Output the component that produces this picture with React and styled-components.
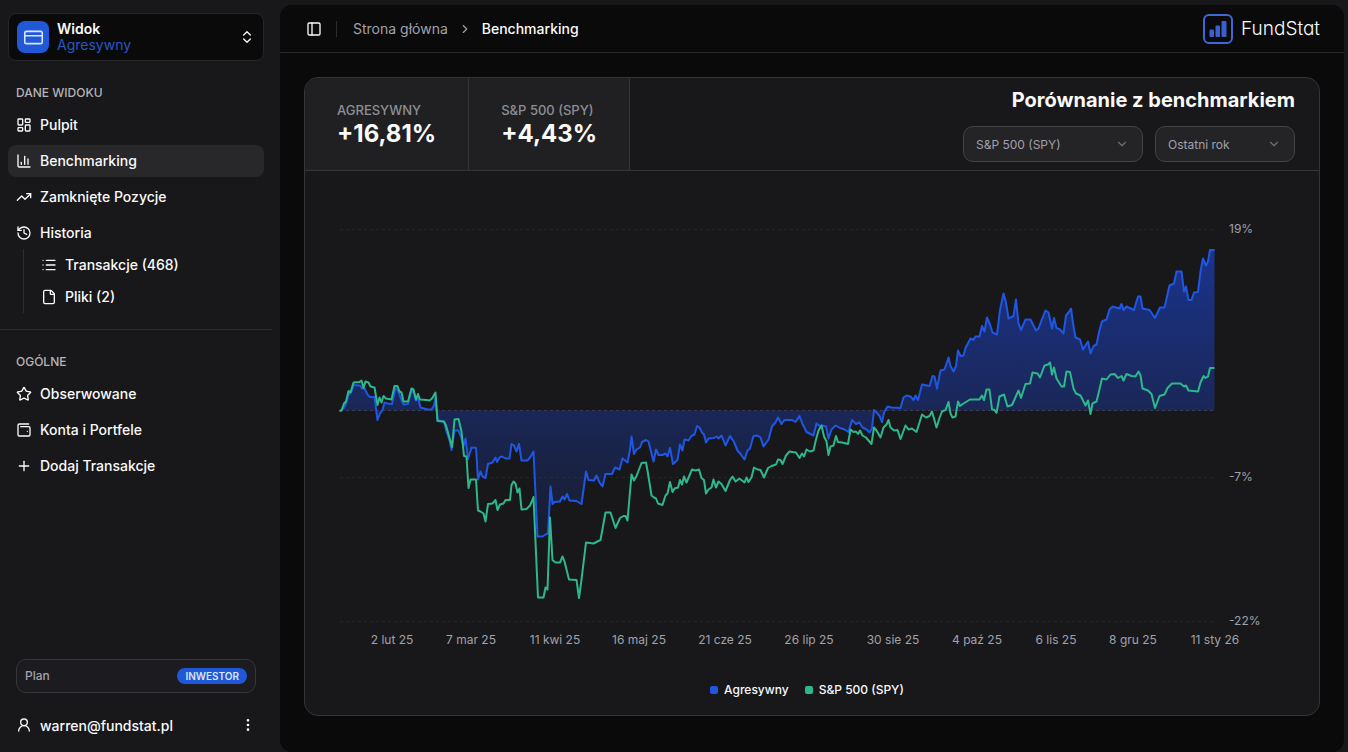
import React, {useState} from "react";
import styled, {createGlobalStyle} from "styled-components";
import {
    ChartColumn,
    ChevronDown,
    ChevronRight,
    ChevronsUpDown,
    CreditCard,
    EllipsisVertical,
    File,
    History,
    LayoutDashboard,
    List,
    PanelLeft,
    Plus,
    Star,
    TrendingUp,
    UserRound,
    WalletMinimal,
} from "lucide-react";

const GlobalStyle = createGlobalStyle`
  * {
    box-sizing: border-box;
  }

  body {
    margin: 0;
    background: #18181a;
    color: #fafafa;
    font-family: Inter, "Liberation Sans", sans-serif;
    font-size: 14px;
    line-height: 20px;
  }

  button, select {
    font-family: inherit;
    color: inherit;
  }

  ul, ol {
    list-style: none;
    margin: 0;
    padding: 0;
  }

  a {
    color: inherit;
    text-decoration: none;
  }
`

const Page = styled.div`
  display: grid;
  grid-template-columns: 272px 1fr;
  gap: 8px;
  min-height: 100vh;
  padding: 5px 4px 0 0;
`

const Sidebar = styled.aside`
  display: flex;
  flex-direction: column;
  padding: 8px 0 11px;
`

const Switcher = styled.button`
  display: flex;
  align-items: center;
  gap: 8px;
  height: 48px;
  margin: 0 8px 8px;
  padding: 8px;
  border: 1px solid #262628;
  border-radius: 8px;
  background: #0a0a0a;
  text-align: left;
`

const SwitcherIcon = styled.span`
  display: flex;
  align-items: center;
  justify-content: center;
  width: 32px;
  height: 32px;
  border-radius: 8px;
  background: #2058d8;
`

const SwitcherText = styled.span`
  display: flex;
  flex: 1;
  flex-direction: column;
  font-size: 14px;
  line-height: 16px;

  strong {
    font-weight: 600;
  }

  span {
    color: #2b56c4;
  }
`

const Group = styled.nav`
  padding: 8px;
`

const Separator = styled.hr`
  width: 100%;
  height: 1px;
  margin: 8px 0;
  border: 0;
  background: #2c2c2f;
`

const GroupLabel = styled.h2`
  margin: 0;
  padding: 0 8px;
  font-size: 12px;
  font-weight: 500;
  line-height: 32px;
  color: #b4b4b8;
`

const Menu = styled.ul`
  display: flex;
  flex-direction: column;
  gap: 4px;
`

const MenuLink = styled.a`
  display: flex;
  align-items: center;
  gap: 8px;
  height: ${p => p.$sub ? '28px' : '32px'};
  padding: 0 8px;
  border-radius: 8px;
  background: ${p => p.$active ? '#28282b' : 'transparent'};
  font-weight: 500;
`

const SubMenu = styled.ul`
  display: flex;
  flex-direction: column;
  gap: 4px;
  margin: 0 0 0 15px;
  padding: 2px 0 2px 9px;
  border-left: 1px solid #2c2c2f;
`

const SidebarFooter = styled.div`
  display: flex;
  flex-direction: column;
  gap: 16px;
  margin-top: auto;
  padding: 0 16px;
`

const Plan = styled.div`
  display: flex;
  align-items: center;
  justify-content: space-between;
  height: 34px;
  padding: 0 8px;
  border: 1px solid #36363a;
  border-radius: 10px;
  background: #1c1c20;
  font-size: 12px;
  font-weight: 500;
  color: #a1a1aa;
`

const Badge = styled.span`
  padding: 0 8px;
  border-radius: 8px;
  background: #2058d8;
  font-size: 10px;
  font-weight: 600;
  line-height: 16px;
  color: #dbe6ff;
`

const Account = styled.button`
  display: flex;
  align-items: center;
  gap: 8px;
  height: 32px;
  padding: 0;
  border: 0;
  background: none;
  font-size: 14px;
  font-weight: 500;

  span {
    flex: 1;
    text-align: left;
  }
`

const Main = styled.main`
  min-width: 0;
  border-radius: 12px;
  background: #0a0a0a;
`

const TopBar = styled.header`
  display: flex;
  align-items: center;
  justify-content: space-between;
  height: 48px;
  padding: 0 24px;
  border-bottom: 1px solid #2c2c2f;
`

const TopBarLeft = styled.div`
  display: flex;
  align-items: center;
`

const IconButton = styled.button`
  display: flex;
  padding: 2px;
  border: 0;
  background: none;
`

const Divider = styled.span`
  width: 1px;
  height: 16px;
  margin: 0 16px 0 12px;
  background: #2c2c2f;
`

const Crumbs = styled.ol`
  display: flex;
  align-items: center;
  gap: 10px;
  color: #a1a1aa;

  svg {
    display: block;
  }

  [aria-current] {
    color: #fafafa;
    font-weight: 500;
  }
`

const Brand = styled.a`
  display: flex;
  align-items: center;
  gap: 8px;
  font-size: 19px;
  font-weight: 300;
  font-feature-settings: "cv11";
`

const Content = styled.div`
  padding: 24px;
`

const Card = styled.section`
  overflow: hidden;
  border: 1px solid #353538;
  border-radius: 14px;
  background: #18181a;
`

const CardHeader = styled.div`
  display: flex;
  border-bottom: 1px solid #353538;
`

const Stat = styled.div`
  display: flex;
  flex-direction: column;
  justify-content: center;
  padding: 0 32px;
  border-right: 1px solid #353538;
  background: #202022;

  span {
    font-size: 13px;
    font-weight: 500;
    line-height: 20px;
    color: #8e8e95;
  }

  strong {
    font-size: 24px;
    font-weight: 700;
    line-height: 28px;
  }
`

const Controls = styled.div`
  display: flex;
  flex: 1;
  flex-direction: column;
  align-items: flex-end;
  gap: 12px;
  padding: 8px 24px;

  h1 {
    margin: 0;
    font-size: 20px;
    font-weight: 700;
    line-height: 28px;
  }
`

const Filters = styled.div`
  display: flex;
  gap: 12px;
`

const SelectBox = styled.label`
  position: relative;
  width: ${p => p.$wide ? '180px' : '140px'};
  color: #a1a1aa;

  select {
    appearance: none;
    width: 100%;
    height: 36px;
    padding: 0 36px 0 12px;
    border: 1px solid #434347;
    border-radius: 10px;
    background: #242427;
    font-size: 12px;
    font-weight: 400;
  }

  svg {
    position: absolute;
    top: 11px;
    right: 14px;
    opacity: 0.6;
    pointer-events: none;
  }
`

const ChartSvg = styled.svg`
  display: block;
  width: 100%;

  text {
    font-size: 12px;
    fill: #a1a1aa;
  }
`

const Legend = styled.ul`
  display: flex;
  justify-content: center;
  gap: 16px;
  padding: 20px 10px 16px 0;
  font-size: 12px;
  font-weight: 500;
  line-height: 18px;

  li {
    display: flex;
    align-items: center;
    gap: 6px;
  }
`

const Swatch = styled.i`
  width: 8px;
  height: 8px;
  border-radius: 2px;
  background: ${p => p.$color};
`

const BLUE = '#1f57e4'
const GREEN = '#2eb88a'
const BASELINE = 410.5

const portfolio = `339.5,411 343.5,408.5 346,403.5 348.5,395 351.5,391.5 353.5,385 360,385.5 362,388.5 364.5,388.5 367.5,394.5
370,397 374.5,397 377.5,420 380,413.5 382.5,410 384.5,402.5 387.5,403.5 392,404 395.5,388.5 398,390.5 400.5,397.5
403.5,404.5 408,404 411.5,390 414,393.5 416,400.5 418,397.5 420.5,407.5 427.5,409.5 431.5,409.5 434,405.5 435.5,397.5
437.5,420 444,422 446.5,431.5 449.5,440 451.5,450 454.5,430.5 458.5,430.5 461.5,438.5 463.5,446.5 465.5,438.5
468,459 471.5,447.5 476,448 478,479.5 480.5,471.5 482.5,476.5 485.5,478 488,464 492.5,462.5 495.5,457.5 497,462
499.5,457.5 502,456.5 505.5,458.5 509.5,458.5 511.5,444 514,445.5 516.5,451.5 519,444 521.5,460.5 527.5,460.5
530,457.5 533.5,451.5 537.5,536.5 542.5,536.5 545.5,534.5 548,533.5 550.5,486.5 552.5,504 554.5,502 560,501.5
562.5,496.5 564.5,499.5 567,494 569.5,500.5 576.5,501 581.5,504 586,471.5 588.5,480 594,480.5 596.5,475.5 599.5,482.5
602.5,486.5 605.5,474 612,474 615,467.5 619.5,469.5 622.5,458.5 627.5,462.5 630,450 631.5,436.5 634,454 636.5,449.5
640,447.5 642,442 646,440 648.5,441.5 651,451.5 653.5,461.5 656,449.5 658.5,455 662.5,455 665.5,453.5 667.5,456.5
670,448 673,464 677.5,460 680,444.5 682.5,450.5 684.5,439.5 688.5,440.5 691.5,436 694.5,434.5 697,426 699.5,427.5
702,432.5 704,434.5 706,442.5 708.5,438.5 714,438 716.5,436.5 718.5,438.5 721.5,435.5 725.5,445.5 730,436 734,442
737.5,450.5 740.5,454 744.5,459.5 747.5,450.5 750,448.5 753.5,436 757.5,435.5 760.5,437.5 763.5,446.5 768.5,439.5
772,426.5 775.5,422.5 778,417.5 781.5,424 784.5,420 792,420 795.5,422 799.5,416 802.5,424 806.5,432 813.5,435.5
816.5,423.5 819.5,426 822,425.5 826,426.5 828.5,438.5 831.5,429.5 835.5,425.5 840,428 844.5,429.5 848.5,432 852,420
856,424 859.5,422.5 862.5,427.5 866.5,429.5 869.5,432.5 872,428.5 874,410 876.5,412.5 879.5,416 882,422 884,412.5
887.5,406.5 891.5,407.5 900.5,408 903.5,397.5 906.5,395.5 910.5,396.5 913.5,400 915.5,395.5 918,400 922,384.5
929.5,386 932.5,376 934.5,376.5 937,388.5 940.5,370.5 944.5,369.5 948.5,357.5 950.5,366 953.5,371.5 956,366
958,350.5 960.5,356 963.5,355.5 965.5,348 970.5,338.5 973.5,340 975.5,336.5 979.5,336.5 982,326 984.5,331.5
987,317.5 990,324.5 992.5,332.5 997,334.5 1000,310 1003.5,293.5 1006,302.5 1008.5,318.5 1013.5,316 1016,299.5
1018.5,323.5 1021,330 1025.5,319.5 1030.5,319.5 1033.5,325.5 1036,330.5 1038.5,328.5 1041.5,320.5 1045.5,310.5
1048.5,312.5 1052,328.5 1054,318 1056.5,328 1060,329.5 1063.5,333.5 1066,315.5 1068.5,312.5 1071,308.5 1073.5,326.5
1075.5,337.5 1080,339.5 1083,349.5 1088,341.5 1090.5,353.5 1093.5,346 1096.5,344.5 1099.5,330 1102,321.5 1106.5,319.5
1109.5,309.5 1112.5,306.5 1119.5,308.5 1121.5,304 1123.5,310 1126.5,306.5 1134,310 1138,296.5 1140.5,296.5
1142.5,308.5 1149.5,310 1152,313.5 1155,318 1160,307.5 1164.5,307.5 1169.5,285.5 1174,283.5 1176.5,271.5
1181.5,271.5 1184,291.5 1186,286.5 1188.5,300 1191.5,300 1194,292.5 1198,292 1200.5,271.5 1203,258.5 1206,265.5
1208,261.5 1210,250 1214.5,250`

const benchmark = `339.5,411 341.5,410.5 344,403.5 346,401.5 348.5,391 350.5,392.5 353.5,382.5 359.5,382 361.5,380.5 363.5,388
365.5,381.5 368.5,382.5 370.5,386.5 374.5,387.5 377.5,405 379.5,397.5 381.5,402.5 383.5,396 386,398.5 391.5,399.5
394.5,386 397.5,386 399.5,391.5 401.5,392.5 403.5,401.5 408,401.5 411.5,388.5 413.5,389.5 416,399.5 418,394
420,399.5 426.5,400 429.5,400.5 432,398.5 435.5,392.5 437.5,421 444,421.5 446,425.5 452,447 454.5,419.5 458.5,419
461.5,431.5 464,456 466.5,456.5 468.5,488 470.5,479.5 476,479.5 478,510.5 480.5,511.5 483.5,513.5 485.5,521.5
488,504 492.5,503.5 495.5,500 497.5,510 500,504.5 503.5,503.5 505.5,500 510,500 511.5,485 513.5,481.5 515.5,483.5
517.5,492.5 519.5,488.5 521.5,509.5 526.5,509 530,505.5 532,501 533.5,497 538,597.5 543.5,597.5 545.5,587.5
547.5,589.5 550,517.5 552.5,560 555.5,562.5 560,562.5 562.5,556.5 564.5,561.5 569,579.5 576.5,580 579,598
581,583.5 586,542.5 593.5,543.5 600.5,540 605.5,512.5 610.5,512.5 615.5,528 620,518 623.5,516 625.5,516 627.5,520.5
631.5,474.5 634,480.5 636.5,476 641.5,463 646,462.5 648,473.5 651.5,495.5 654,497.5 656,498.5 658,503.5 662.5,505
665.5,495.5 667.5,493.5 670,482 672.5,492 674.5,488.5 678,487.5 680,480 682,484.5 684,476.5 686.5,482.5 692,469.5
695.5,470.5 699,469.5 701.5,478 704,480 706,493.5 708.5,489.5 711.5,487.5 713.5,479.5 716,487.5 718.5,481.5
721.5,484 725.5,491 730,480 732.5,476.5 735.5,481.5 739.5,478.5 742,480.5 744.5,482.5 746.5,477.5 748.5,482
751.5,477.5 754,467.5 757.5,469.5 760.5,470 764,477.5 768,468 771.5,466 776,464.5 778,459.5 780.5,460 782.5,464
786,455.5 789.5,451.5 792.5,452 796,452.5 799.5,458 802,453.5 804,456.5 806.5,449.5 810,451.5 813.5,450.5
816,439.5 818.5,430.5 821.5,425.5 824,436.5 826.5,441.5 828.5,455 830.5,446.5 833.5,445.5 836,436 838,442
842,442.5 848,444 850.5,429.5 853.5,432 856,431.5 858,434 860,430.5 862.5,435.5 866,437.5 871.5,444 874,427.5
876.5,430.5 880.5,437.5 883.5,427.5 886.5,424.5 888.5,420 890.5,427.5 894,430.5 897.5,430 900.5,439 905.5,425.5
908.5,429.5 912,428.5 916.5,432 922,414.5 926,417.5 929.5,416 932,411.5 936.5,427.5 939.5,418 942,411.5
945.5,410 948.5,402 950.5,413.5 952.5,417.5 955.5,416.5 958,401.5 960,406 963.5,403.5 970,399.5 979.5,399.5
982,395.5 984,400 986.5,389.5 989.5,389.5 992,409.5 994.5,410 996.5,413 999.5,396.5 1004,394.5 1007.5,406.5
1012,405 1014.5,399.5 1018.5,390.5 1021,398 1025.5,384 1030,383.5 1032.5,372.5 1037.5,373.5 1040,377.5 1044.5,365.5
1048,364.5 1050,362.5 1052,374.5 1054,367.5 1056.5,378.5 1061.5,386.5 1064,386.5 1066.5,371.5 1070,372 1073.5,388.5
1076,393.5 1080.5,395.5 1083.5,401.5 1085.5,405.5 1088,400.5 1090.5,414 1092.5,403.5 1096.5,401.5 1098.5,393.5
1102,378.5 1106.5,379.5 1110.5,374.5 1114.5,374 1118,378 1121.5,376 1123.5,380.5 1126.5,374 1131.5,376 1135.5,376.5
1138.5,371.5 1140.5,375.5 1142.5,388.5 1148,390.5 1151.5,394 1155,408 1159.5,396 1164.5,394.5 1167.5,388
1172,383.5 1180.5,383.5 1184,386.5 1186,385.5 1188.5,390.5 1198,391.5 1200.5,382.5 1203.5,376 1205.5,378
1208,376.5 1210,368 1214.5,368`

const yTicks = [[229, '19%'], [477, '-7%'], [621, '-22%']]
const xTicks = [
    [392, '2 lut 25'], [471, '7 mar 25'], [555, '11 kwi 25'], [639, '16 maj 25'],
    [725, '21 cze 25'], [809, '26 lip 25'], [893, '30 sie 25'], [977, '4 paź 25'],
    [1056, '6 lis 25'], [1133, '8 gru 25'], [1215, '11 sty 26'],
]

const mainMenu = [
    {label: 'Pulpit', icon: LayoutDashboard},
    {label: 'Benchmarking', icon: ChartColumn, active: true},
    {label: 'Zamknięte Pozycje', icon: TrendingUp},
    {
        label: 'Historia', icon: History, children: [
            {label: 'Transakcje (468)', icon: List},
            {label: 'Pliki (2)', icon: File},
        ]
    },
]

const generalMenu = [
    {label: 'Obserwowane', icon: Star},
    {label: 'Konta i Portfele', icon: WalletMinimal},
    {label: 'Dodaj Transakcje', icon: Plus},
]

function MenuItem({item, sub}) {
    const Icon = item.icon
    return (<li>
        <MenuLink href="#" $active={item.active} $sub={sub}>
            <Icon size={16}/>{item.label}
        </MenuLink>
        {item.children && <SubMenu>
            {item.children.map(child => <MenuItem key={child.label} item={child} sub/>)}
        </SubMenu>}
    </li>)
}

function Logo() {
    return (<svg width="30" height="30" viewBox="0 0 30 30" fill="none" aria-hidden="true">
        <rect x="1" y="1" width="28" height="28" rx="5" stroke="#3f66d6" strokeWidth="2"/>
        <g fill="#3a5fd0">
            <rect x="6.5" y="15.5" width="4.5" height="7.5" rx="1"/>
            <rect x="12.5" y="11.5" width="4.5" height="11.5" rx="1"/>
            <rect x="18.5" y="7" width="5" height="16" rx="1"/>
        </g>
    </svg>)
}

function Chart() {
    return (<ChartSvg viewBox="305 171 1014 490" role="img" aria-label="Porównanie z benchmarkiem">
        <defs>
            <linearGradient id="fill" x1="0" y1="250" x2="0" y2="537" gradientUnits="userSpaceOnUse">
                <stop offset="0" stopColor="#1d46d8" stopOpacity="0.6"/>
                <stop offset="1" stopColor="#1d46d8" stopOpacity="0.1"/>
            </linearGradient>
        </defs>
        {yTicks.map(([y, label]) => <g key={label}>
            <line x1="340" x2="1215" y1={y + 0.5} y2={y + 0.5} stroke="#242426" strokeDasharray="3 3"/>
            <text x="1229" y={y + 4}>{label}</text>
        </g>)}
        <polygon points={`339.5,${BASELINE} ${portfolio} 1214.5,${BASELINE}`} fill="url(#fill)"/>
        <line x1="340" x2="1215" y1={BASELINE} y2={BASELINE} stroke="#3a3a50" strokeDasharray="3 3"/>
        <polyline points={portfolio} fill="none" stroke={BLUE} strokeWidth="2" strokeLinejoin="round"/>
        <polyline points={benchmark} fill="none" stroke={GREEN} strokeWidth="2" strokeLinejoin="round"/>
        {xTicks.map(([x, label]) => <text key={label} x={x} y="644" textAnchor="middle">{label}</text>)}
    </ChartSvg>)
}

function App() {
    const [index, setIndex] = useState('S&P 500 (SPY)')
    const [range, setRange] = useState('Ostatni rok')

    return (<>
        <GlobalStyle/>
        <Page>
            <Sidebar>
                <Switcher type="button">
                    <SwitcherIcon><CreditCard size={21} strokeWidth={1.75} color="#dbe6ff"/></SwitcherIcon>
                    <SwitcherText>
                        <strong>Widok</strong>
                        <span>Agresywny</span>
                    </SwitcherText>
                    <ChevronsUpDown size={16}/>
                </Switcher>
                <Group>
                    <GroupLabel>DANE WIDOKU</GroupLabel>
                    <Menu>{mainMenu.map(item => <MenuItem key={item.label} item={item}/>)}</Menu>
                </Group>
                <Separator/>
                <Group>
                    <GroupLabel>OGÓLNE</GroupLabel>
                    <Menu>{generalMenu.map(item => <MenuItem key={item.label} item={item}/>)}</Menu>
                </Group>
                <SidebarFooter>
                    <Plan>Plan <Badge>INWESTOR</Badge></Plan>
                    <Account type="button">
                        <UserRound size={16}/>
                        <span>warren@fundstat.pl</span>
                        <EllipsisVertical size={16}/>
                    </Account>
                </SidebarFooter>
            </Sidebar>
            <Main>
                <TopBar>
                    <TopBarLeft>
                        <IconButton type="button" aria-label="Menu"><PanelLeft size={16}/></IconButton>
                        <Divider/>
                        <Crumbs>
                            <li><a href="#">Strona główna</a></li>
                            <li><ChevronRight size={14}/></li>
                            <li aria-current="page">Benchmarking</li>
                        </Crumbs>
                    </TopBarLeft>
                    <Brand href="#"><Logo/>FundStat</Brand>
                </TopBar>
                <Content>
                    <Card>
                        <CardHeader>
                            <Stat><span>AGRESYWNY</span><strong>+16,81%</strong></Stat>
                            <Stat><span>S&amp;P 500 (SPY)</span><strong>+4,43%</strong></Stat>
                            <Controls>
                                <h1>Porównanie z benchmarkiem</h1>
                                <Filters>
                                    <SelectBox $wide>
                                        <select aria-label="Benchmark" value={index}
                                                onChange={e => setIndex(e.target.value)}>
                                            <option>S&amp;P 500 (SPY)</option>
                                        </select>
                                        <ChevronDown size={14}/>
                                    </SelectBox>
                                    <SelectBox>
                                        <select aria-label="Okres" value={range}
                                                onChange={e => setRange(e.target.value)}>
                                            <option>Ostatni rok</option>
                                        </select>
                                        <ChevronDown size={14}/>
                                    </SelectBox>
                                </Filters>
                            </Controls>
                        </CardHeader>
                        <Chart/>
                        <Legend>
                            <li><Swatch $color={BLUE}/>Agresywny</li>
                            <li><Swatch $color={GREEN}/>S&amp;P 500 (SPY)</li>
                        </Legend>
                    </Card>
                </Content>
            </Main>
        </Page>
    </>)
}

export default App;
